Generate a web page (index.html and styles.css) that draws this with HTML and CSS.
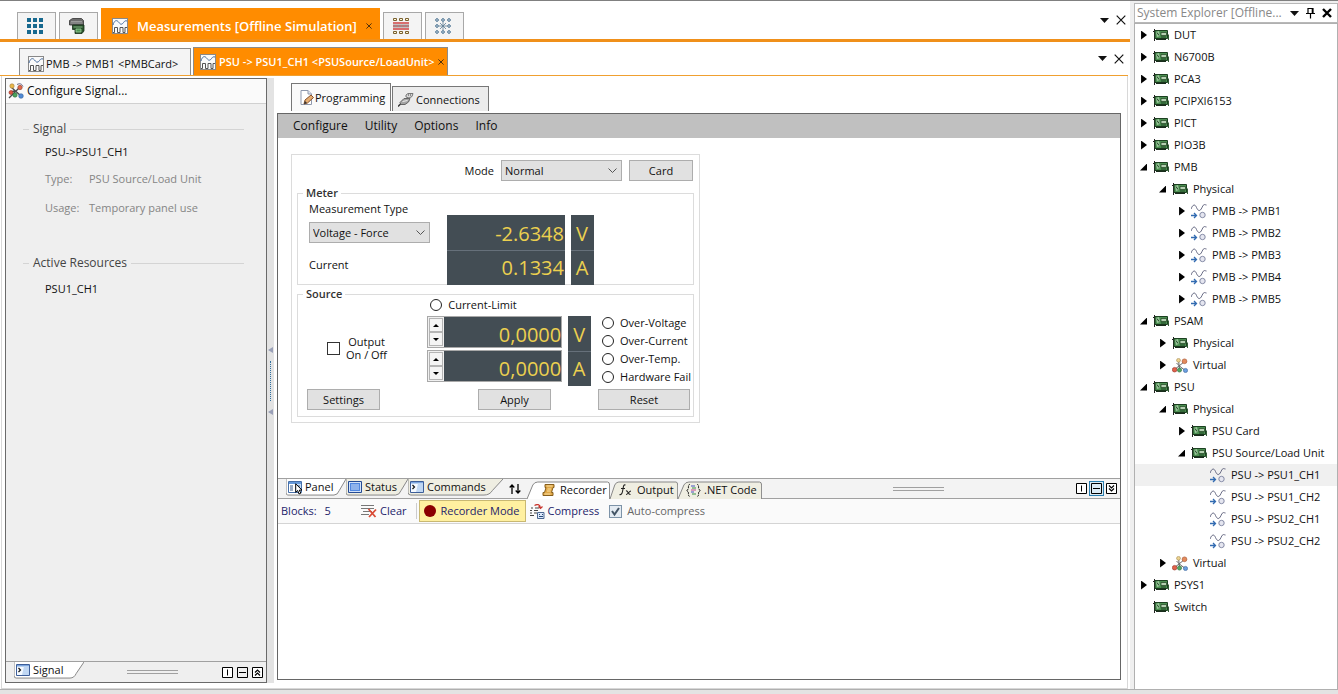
FILE: index.html
```html
<!DOCTYPE html>
<html lang="en">
<head>
<meta charset="utf-8">
<title>Measurements</title>
<link rel="stylesheet" href="styles.css">
</head>
<body>
<svg class="defs" aria-hidden="true">
  <symbol id="i-wave" viewBox="0 0 16 16"><rect x=".5" y=".5" width="15" height="15" fill="#fafafa" stroke="#888"/><path d="M1 7c1-4 3-5 4.500-4S8 7 10 6s2-4 5-3" fill="none" stroke="#456a9c"/><path d="M1 14.500h1.500v-5h3v5h2.500v-5h3v5h2v-5h2" fill="none" stroke="#555"/></symbol>
  <symbol id="i-grid" viewBox="0 0 16 16"><path d="M0 0h4v4H0zM6 0h4v4H6zM12 0h4v4h-4zM0 6h4v4H0zM6 6h4v4H6zM12 6h4v4h-4zM0 12h4v4H0zM6 12h4v4H6zM12 12h4v4h-4z" fill="#17698f"/></symbol>
  <symbol id="i-rack" viewBox="0 0 16 16"><path d="M.5 2.500l3-2h9l2 2V7H.5z" fill="#6c6c6c" stroke="#333" stroke-width=".8"/><path d="M2 3.500h11M1.500 5h12" stroke="#b0b0b0" stroke-width=".7"/><path d="M3.500 7h11.500v6l-2 2.500H6v-4H3.500z" fill="#28532c" stroke="#17301b" stroke-width=".8"/><path d="M4.500 9h9M7 11h5v3H7z" fill="#4d9653" stroke="#9ccc9c" stroke-width=".8"/></symbol>
  <symbol id="i-bus" viewBox="0 0 16 16"><path d="M0 5h16M0 11h16" stroke="#cf4242" stroke-width="1.600"/><path d="M0 6.500h16v3H0z" fill="#9a8c8c"/><path d="M0 8h16" stroke="#d66" stroke-dasharray="2 1"/><g fill="#fff8d8" stroke="#7a6232"><path d="M.5.500h3v2h-3zM6.500.500h3v2h-3zM12.500.500h3v2h-3zM.5 13.500h3v2h-3zM6.500 13.500h3v2h-3zM12.500 13.500h3v2h-3z"/></g></symbol>
  <symbol id="i-star" viewBox="0 0 16 16"><g fill="#fff" stroke="#376487"><circle cx="2" cy="2" r="1.300"/><circle cx="8" cy="2" r="1.300"/><circle cx="14" cy="2" r="1.300"/><circle cx="2" cy="8" r="1.300"/><circle cx="14" cy="8" r="1.300"/><circle cx="2" cy="14" r="1.300"/><circle cx="8" cy="14" r="1.300"/><circle cx="14" cy="14" r="1.300"/></g><path d="M8 4v8M4 8h8M5 5l6 6M11 5l-6 6" stroke="#5c7b93" stroke-width=".8"/></symbol>
  <symbol id="i-card" viewBox="0 0 16 12"><path d="M1.500 0v12M0 2.500h2" stroke="#222"/><path d="M2 1.500h12.500v8H2z" fill="#4a8f50" stroke="#1c4021"/><path d="M3 3l3-1 1 5-3 1z" fill="#9bc79b"/><path d="M4 3.500l2 3M8 8h5" stroke="#1f4424"/><path d="M8 3.500h5.500v3H8z" fill="#b5d0b2" stroke="#294f2c" stroke-width=".8"/><path d="M3 9.500h10v1.500H3z" fill="#182c1b"/><path d="M14.500 5l1 1v5" fill="none" stroke="#335c37"/></symbol>
  <symbol id="i-signal" viewBox="0 0 16 15"><path d="M0 5C2 0 4 0 5.500 3.500S9 8 11 3.500 14 1 15.500 1" fill="none" stroke="#60637e"/><path d="M0 11.500h5M3 9l2.500 2.500L3 14" fill="none" stroke="#326bb1" stroke-width="1.300"/><circle cx="11.500" cy="11" r="2.700" fill="#e5e6f0" stroke="#858ba6"/></symbol>
  <symbol id="i-virtual" viewBox="0 0 16 15"><path d="M2.500 11.500L7 8l5.500-4.500M4.500 5l4 4 5 3.500M6.500 2l1 9" fill="none" stroke="#666"/><circle cx="6.500" cy="2.300" r="1.900" fill="#ecd391" stroke="#a58a4e" stroke-width=".6"/><circle cx="12.500" cy="3.300" r="2.400" fill="#e38a5c" stroke="#a14f2c" stroke-width=".6"/><circle cx="2.600" cy="11.700" r="2.300" fill="#e2614a" stroke="#922f21" stroke-width=".6"/><circle cx="7.500" cy="12" r="2.100" fill="#56a862" stroke="#28683b" stroke-width=".6"/><circle cx="13.500" cy="12.500" r="2.100" fill="#6c9fe0" stroke="#315f99" stroke-width=".6"/></symbol>
  <symbol id="i-configure" viewBox="0 0 16 16"><path d="M1 15L13 3M3 4l10 9M2 9l5-1" fill="none" stroke="#4a4a4a" stroke-width="1.300"/><path d="M9 1.500c3-1.500 5-.5 6 2" fill="none" stroke="#668"/><circle cx="4" cy="3" r="2.200" fill="#e9b949" stroke="#a57a3e" stroke-width=".6"/><circle cx="12" cy="4.500" r="2.200" fill="#e0684c" stroke="#914025" stroke-width=".6"/><circle cx="3" cy="9.500" r="2" fill="#df5540" stroke="#922f21" stroke-width=".6"/><circle cx="7" cy="12" r="2.200" fill="#4ea45b" stroke="#28683b" stroke-width=".6"/><circle cx="13" cy="13" r="2.300" fill="#528bd5" stroke="#315f99" stroke-width=".6"/></symbol>
  <symbol id="i-edit" viewBox="0 0 14 15"><path d="M1 .5h7l3.500 3.500v10.500H1z" fill="#fff" stroke="#8e98ad"/><path d="M8 .5V4h3.500" fill="#dfe5f0" stroke="#8e98ad"/><path d="M4 14l1-4 6-5 2.500 2.500-6 5.500z" fill="#e5ae73" stroke="#87502a"/><path d="M4 14l1-3 2 2z" fill="#333"/></symbol>
  <symbol id="i-plug" viewBox="0 0 16 15"><path d="M0 14l3-3" stroke="#333" stroke-width="1.500"/><path d="M2 10l4-4h6l-1.500 3.500L7 12H3z" fill="#a5a5a5" stroke="#666"/><path d="M4.500 9l5-1" stroke="#eee"/><path d="M8 2.500l2-1.500h5l-1 3-3 1.500-3-1z" fill="#d8d8d8" stroke="#777"/><path d="M10 2.500h4" stroke="#444" stroke-dasharray="1 1"/></symbol>
  <symbol id="i-window" viewBox="0 0 14 12"><path d="M.5.500h13v11H.5z" fill="#fff" stroke="#476fa8"/><path d="M1 1h12v2H1z" fill="#6599da"/><path d="M7 3h6v8H7z" fill="#c5dcf7"/><path d="M2 5h3M2 7h3M2 9h3M8 5h4M8 9h4" stroke="#345989"/></symbol>
  <symbol id="i-cursor" viewBox="0 0 9 12"><path d="M.7.800v8.500l2-1.800L4 11l1.800-.8-1.500-3.100H7z" fill="#fff" stroke="#000"/></symbol>
  <symbol id="i-status" viewBox="0 0 14 12"><path d="M.5.500h13v11H.5z" fill="#d2e3fa" stroke="#254b94"/><path d="M2 2h10v8H2z" fill="#4f86df"/><path d="M3 4h8M3 6h8M3 8h8" stroke="#cfe0fa"/></symbol>
  <symbol id="i-prompt" viewBox="0 0 14 12"><path d="M.5.500h13v11H.5z" fill="#f4f9ff" stroke="#3d5e99"/><path d="M1 1h12v1.500H1z" fill="#7ca6df"/><path d="M8 2.500h5V11H6z" fill="#c0d7f3"/><path d="M2.500 4L4.500 6 2.500 8" fill="none" stroke="#111" stroke-width="1.200"/></symbol>
  <symbol id="i-scroll" viewBox="0 0 12 12"><path d="M2.500.500h9v3h-1l-1.500 5h1.500v3H.5v-3h1.500l1.500-5h-1z" fill="#e0a848" stroke="#875e1c"/><path d="M4 2h6M2 10h6M5 5h3.500M4.500 7h3.500" stroke="#f8dda0"/></symbol>
  <symbol id="i-fx" viewBox="0 0 13 12"><path d="M6.500 1C4.500.5 4.500 2 4 5S3 11.500.5 10.500M2 4.500h4M7 7c2-1 2 4 4.500 3.500M12 7c-2 0-3 3.500-5 3.500" fill="none" stroke="#222" stroke-width="1.100"/></symbol>
  <symbol id="i-code" viewBox="0 0 15 14"><path d="M4 1C1.500.5 3 5 2 6L.5 7 2 8c1 1-.5 5 2 5M11 1c2.500-.5 1 4 2 5l1.500 1L13 8c-1 1 .5 5-2 5" fill="none" stroke="#222" stroke-dasharray="2 .6"/><path d="M5 2.500h4M5 8.500h3" stroke="#4652c1"/><path d="M6 4.500h4M6 10.500h4" stroke="#389047"/><path d="M5 6.500h5" stroke="#c74390"/></symbol>
  <symbol id="i-clear" viewBox="0 0 16 14"><path d="M0 1.500h13M0 4.500h13M2 7.500h9M0 10.500h8" stroke="#777"/><path d="M7.500 5l7 8M15 5.500l-7 7.500" stroke="#d94b36" stroke-width="1.800"/></symbol>
  <symbol id="i-compress" viewBox="0 0 15 15"><path d="M1 4h2M5 4h4M0 6.500h2M4 6.500h4M0 9h2M4 9h3M0 11.500h4" stroke="#444"/><path d="M4.500 1.500C7 0 10 0 10.500 4M8.500 2.500l2 2 2-2" fill="none" stroke="#c9362e" stroke-width="1.200"/><path d="M7.500 8.500h6.500v6H7.500z" fill="#dce8fa" stroke="#4c6892"/><path d="M9 10.500h1M12 10.500h1M9 12.500h4" stroke="#294b78"/></symbol>
  <symbol id="i-x" viewBox="0 0 10 10"><path d="M.7.700l8.600 8.600M9.300.700L.7 9.300" stroke="#111" stroke-width="1.200"/></symbol>
  <symbol id="i-boldx" viewBox="0 0 10 10"><path d="M1 1l8 8M9 1L1 9" stroke="#000" stroke-width="2.400"/></symbol>
  <symbol id="i-down" viewBox="0 0 9 5"><path d="M0 0h9L4.500 5z" fill="#111"/></symbol>
  <symbol id="i-pin" viewBox="0 0 9 12"><path d="M2 1.500h5v5H2zM0 6.500h9M4.500 7v4.500M6.300 2v4" fill="none" stroke="#000" stroke-width="1.200"/></symbol>
  <symbol id="i-split" viewBox="0 0 11 11"><path d="M.5.500h10v10H.5zM5.500 2.500v6" fill="#fff" stroke="#000"/></symbol>
  <symbol id="i-stack" viewBox="0 0 11 11"><path d="M.5.500h10v10H.5zM2 5.500h7" fill="none" stroke="#000"/></symbol>
  <symbol id="i-expand" viewBox="0 0 11 11"><path d="M.5.500h10v10H.5z" fill="#fff" stroke="#000"/><path d="M3 5.500L5.500 3 8 5.500M3 8.500L5.500 6 8 8.500" fill="none" stroke="#000" stroke-width="1.200"/></symbol>
  <symbol id="i-collapse" viewBox="0 0 11 11"><path d="M.5.500h10v10H.5z" fill="#fff" stroke="#000"/><path d="M3 2.500L5.500 5 8 2.500M3 5.500L5.500 8 8 5.500" fill="none" stroke="#000" stroke-width="1.200"/></symbol>
  <symbol id="i-swap" viewBox="0 0 12 10"><path d="M3 10V1M.7 3.500L3 1l2.300 2.500M9 0v9M6.700 6.500L9 9l2.300-2.500" fill="none" stroke="#000" stroke-width="1.300"/></symbol>
  <symbol id="i-hang" viewBox="0 0 100 18" preserveAspectRatio="none"><path d="M0 0V14Q0 17 3 17H80Q86 17 89 12L100 0" stroke="#888" vector-effect="non-scaling-stroke"/></symbol>
  <symbol id="i-stand" viewBox="0 0 100 18" preserveAspectRatio="none"><path d="M0 18L7 4Q9 1 13 1H97Q99.500 1 99.500 4V18" stroke="#888" vector-effect="non-scaling-stroke"/></symbol>
</svg>

<div class="app">
  <main class="workspace">
    <nav class="top-tabs">
      <button class="tab icon-tab" aria-label="Overview"><svg class="i16"><use href="#i-grid"/></svg></button>
      <button class="tab icon-tab" aria-label="Rack"><svg class="i16"><use href="#i-rack"/></svg></button>
      <div class="tab top-active">
        <svg class="i16"><use href="#i-wave"/></svg>
        <span>Measurements [Offline Simulation]</span>
        <button class="close" aria-label="Close"><svg class="i6"><use href="#i-x"/></svg></button>
      </div>
      <button class="tab icon-tab" aria-label="Bus"><svg class="i16"><use href="#i-bus"/></svg></button>
      <button class="tab icon-tab" aria-label="Network"><svg class="i16"><use href="#i-star"/></svg></button>
      <div class="tab-tools">
        <button aria-label="List"><svg class="i-tri"><use href="#i-down"/></svg></button>
        <button aria-label="Close all"><svg class="i10"><use href="#i-x"/></svg></button>
      </div>
    </nav>

    <nav class="doc-tabs">
      <button class="tab doc-tab"><svg class="i16"><use href="#i-wave"/></svg>PMB -&gt; PMB1 &lt;PMBCard&gt;</button>
      <div class="tab doc-active">
        <svg class="i16"><use href="#i-wave"/></svg><span>PSU -&gt; PSU1_CH1 &lt;PSUSource/LoadUnit&gt;</span>
        <button class="close" aria-label="Close"><svg class="i6"><use href="#i-x"/></svg></button>
      </div>
      <div class="tab-tools">
        <button aria-label="List"><svg class="i-tri"><use href="#i-down"/></svg></button>
        <button aria-label="Close all"><svg class="i10"><use href="#i-x"/></svg></button>
      </div>
    </nav>

    <div class="document">
      <aside class="signal-panel">
        <header class="signal-head"><svg class="i16"><use href="#i-configure"/></svg>Configure Signal...</header>
        <div class="signal-body">
          <h2 class="rule">Signal</h2>
          <p class="name">PSU-&gt;PSU1_CH1</p>
          <dl class="facts">
            <dt>Type:</dt><dd>PSU Source/Load Unit</dd>
            <dt>Usage:</dt><dd>Temporary panel use</dd>
          </dl>
          <h2 class="rule">Active Resources</h2>
          <p class="name resource">PSU1_CH1</p>
        </div>
        <footer class="signal-foot">
          <button class="strip-tab hang selected signal-tab"><svg class="shape"><use href="#i-hang"/></svg><svg class="i14"><use href="#i-prompt"/></svg><span>Signal</span></button>
          <span class="grip"></span>
          <div class="pane-tools">
            <button aria-label="Split"><svg class="i11"><use href="#i-split"/></svg></button>
            <button aria-label="Stack"><svg class="i11"><use href="#i-stack"/></svg></button>
            <button aria-label="Expand"><svg class="i11"><use href="#i-expand"/></svg></button>
          </div>
        </footer>
      </aside>

      <div class="splitter">
        <span class="split-arrow"></span><span class="split-dots"></span><span class="split-arrow"></span>
      </div>

      <section class="editor">
        <nav class="page-tabs">
          <button class="page-tab current"><svg class="i14t"><use href="#i-edit"/></svg>Programming</button>
          <button class="page-tab"><svg class="i16"><use href="#i-plug"/></svg>Connections</button>
        </nav>
        <div class="editor-box">
          <nav class="menu">
            <button>Configure</button><button>Utility</button><button>Options</button><button>Info</button>
          </nav>
          <div class="canvas">
            <form class="psu">
              <div class="mode-row">
                <label for="mode">Mode</label>
                <select id="mode"><option>Normal</option></select>
                <button type="button" class="btn btn-card">Card</button>
              </div>
              <fieldset>
                <legend>Meter</legend>
                <div class="meter">
                  <div class="meter-labels">
                    <label for="mtype">Measurement Type</label>
                    <select id="mtype"><option>Voltage - Force</option></select>
                    <span class="current-label">Current</span>
                  </div>
                  <div class="lcd"><output>-2.6348</output><output>0.1334</output></div>
                  <div class="lcd unit"><span>V</span><span>A</span></div>
                </div>
              </fieldset>
              <fieldset class="source-set">
                <legend>Source</legend>
                <div class="source">
                  <label class="output"><input type="checkbox"><span>Output<br>On / Off</span></label>
                  <div class="levels">
                    <label class="radio limit"><input type="radio" name="limit">Current-Limit</label>
                    <div class="spin">
                      <div class="spin-btns"><button type="button" class="up" aria-label="Raise voltage"></button><button type="button" class="down" aria-label="Lower voltage"></button></div>
                      <input type="text" aria-label="Voltage" value="0,0000">
                    </div>
                    <div class="spin">
                      <div class="spin-btns"><button type="button" class="up" aria-label="Raise current"></button><button type="button" class="down" aria-label="Lower current"></button></div>
                      <input type="text" aria-label="Current" value="0,0000">
                    </div>
                  </div>
                  <div class="lcd unit"><span>V</span><span>A</span></div>
                  <div class="faults">
                    <label class="radio"><input type="radio" name="f1">Over-Voltage</label>
                    <label class="radio"><input type="radio" name="f2">Over-Current</label>
                    <label class="radio"><input type="radio" name="f3">Over-Temp.</label>
                    <label class="radio"><input type="radio" name="f4">Hardware Fail</label>
                  </div>
                </div>
                <div class="actions">
                  <button type="button" class="btn">Settings</button>
                  <button type="button" class="btn">Apply</button>
                  <button type="button" class="btn btn-wide">Reset</button>
                </div>
              </fieldset>
            </form>
          </div>

          <div class="strip">
            <button class="strip-tab hang selected w-panel"><svg class="shape"><use href="#i-hang"/></svg><span class="stacked"><svg class="i14"><use href="#i-window"/></svg><svg class="pointer"><use href="#i-cursor"/></svg></span><span>Panel</span></button>
            <button class="strip-tab hang w-status"><svg class="shape"><use href="#i-hang"/></svg><svg class="i14"><use href="#i-status"/></svg><span>Status</span></button>
            <button class="strip-tab hang w-commands"><svg class="shape"><use href="#i-hang"/></svg><svg class="i14"><use href="#i-prompt"/></svg><span>Commands</span></button>
            <button class="swap" aria-label="Swap panes"><svg class="i12"><use href="#i-swap"/></svg></button>
            <button class="strip-tab stand selected w-recorder"><svg class="shape"><use href="#i-stand"/></svg><svg class="i12s"><use href="#i-scroll"/></svg><span>Recorder</span></button>
            <button class="strip-tab stand w-output"><svg class="shape"><use href="#i-stand"/></svg><svg class="i12s"><use href="#i-fx"/></svg><span>Output</span></button>
            <button class="strip-tab stand w-code"><svg class="shape"><use href="#i-stand"/></svg><svg class="i15"><use href="#i-code"/></svg><span>.NET Code</span></button>
            <span class="grip"></span>
            <div class="pane-tools">
              <button aria-label="Split"><svg class="i11"><use href="#i-split"/></svg></button>
              <button class="on" aria-label="Stack"><svg class="i11"><use href="#i-stack"/></svg></button>
              <button aria-label="Collapse"><svg class="i11"><use href="#i-collapse"/></svg></button>
            </div>
          </div>
          <div class="toolbar">
            <span class="blocks">Blocks: <b>5</b></span>
            <button class="tool"><svg class="i16"><use href="#i-clear"/></svg>Clear</button>
            <span class="sep"></span>
            <button class="tool rec"><span class="dot"></span>Recorder Mode</button>
            <button class="tool"><svg class="i15"><use href="#i-compress"/></svg>Compress</button>
            <label class="auto"><input type="checkbox" checked>Auto-compress</label>
          </div>
          <div class="log"></div>
        </div>
      </section>
    </div>
  </main>

  <aside class="explorer">
    <header class="explorer-head">
      <h2>System Explorer [Offline...</h2>
      <button aria-label="Menu"><svg class="i-tri"><use href="#i-down"/></svg></button>
      <button aria-label="Pin"><svg class="pin"><use href="#i-pin"/></svg></button>
      <button aria-label="Close"><svg class="i10"><use href="#i-boldx"/></svg></button>
    </header>
    <ul class="tree">
      <li class="l0 shut"><svg class="card"><use href="#i-card"/></svg>DUT</li>
      <li class="l0 shut"><svg class="card"><use href="#i-card"/></svg>N6700B</li>
      <li class="l0 shut"><svg class="card"><use href="#i-card"/></svg>PCA3</li>
      <li class="l0 shut"><svg class="card"><use href="#i-card"/></svg>PCIPXI6153</li>
      <li class="l0 shut"><svg class="card"><use href="#i-card"/></svg>PICT</li>
      <li class="l0 shut"><svg class="card"><use href="#i-card"/></svg>PIO3B</li>
      <li class="l0 open"><svg class="card"><use href="#i-card"/></svg>PMB</li>
      <li class="l1 open"><svg class="card"><use href="#i-card"/></svg>Physical</li>
      <li class="l2 shut"><svg class="sig"><use href="#i-signal"/></svg>PMB -&gt; PMB1</li>
      <li class="l2 shut"><svg class="sig"><use href="#i-signal"/></svg>PMB -&gt; PMB2</li>
      <li class="l2 shut"><svg class="sig"><use href="#i-signal"/></svg>PMB -&gt; PMB3</li>
      <li class="l2 shut"><svg class="sig"><use href="#i-signal"/></svg>PMB -&gt; PMB4</li>
      <li class="l2 shut"><svg class="sig"><use href="#i-signal"/></svg>PMB -&gt; PMB5</li>
      <li class="l0 open"><svg class="card"><use href="#i-card"/></svg>PSAM</li>
      <li class="l1 shut"><svg class="card"><use href="#i-card"/></svg>Physical</li>
      <li class="l1 shut"><svg class="sig"><use href="#i-virtual"/></svg>Virtual</li>
      <li class="l0 open"><svg class="card"><use href="#i-card"/></svg>PSU</li>
      <li class="l1 open"><svg class="card"><use href="#i-card"/></svg>Physical</li>
      <li class="l2 shut"><svg class="card"><use href="#i-card"/></svg>PSU Card</li>
      <li class="l2 open"><svg class="card"><use href="#i-card"/></svg>PSU Source/Load Unit</li>
      <li class="l3 picked"><svg class="sig"><use href="#i-signal"/></svg>PSU -&gt; PSU1_CH1</li>
      <li class="l3"><svg class="sig"><use href="#i-signal"/></svg>PSU -&gt; PSU1_CH2</li>
      <li class="l3"><svg class="sig"><use href="#i-signal"/></svg>PSU -&gt; PSU2_CH1</li>
      <li class="l3"><svg class="sig"><use href="#i-signal"/></svg>PSU -&gt; PSU2_CH2</li>
      <li class="l1 shut"><svg class="sig"><use href="#i-virtual"/></svg>Virtual</li>
      <li class="l0 shut"><svg class="card"><use href="#i-card"/></svg>PSYS1</li>
      <li class="l0"><svg class="card"><use href="#i-card"/></svg>Switch</li>
    </ul>
  </aside>
</div>
</body>
</html>
```

FILE: styles.css
```css
* { box-sizing: border-box; }
html, body { height: 100%; }
body {
  margin: 0;
  font: 11px/16px "Open Sans", "Noto Sans", sans-serif;
  color: #111;
  background: #e3e3e3;
}
button, input, select { font: inherit; color: inherit; margin: 0; }
button { border: 0; padding: 0; background: none; white-space: nowrap; }
h2, p, dl, dd, ul { margin: 0; padding: 0; }
svg { display: block; flex: none; }
.defs { position: absolute; width: 0; height: 0; }
.i16 { width: 16px; height: 16px; }
.i15 { width: 15px; height: 15px; }
.i14 { width: 14px; height: 12px; }
.i14t { width: 14px; height: 15px; }
.i12 { width: 12px; height: 10px; }
.i12s { width: 13px; height: 12px; }
.i11 { width: 11px; height: 11px; }
.i10 { width: 10px; height: 10px; }
.i6 { width: 6px; height: 6px; }
.i-tri { width: 9px; height: 5px; }
.pin { width: 9px; height: 12px; }

.app {
  display: flex;
  min-height: 100vh;
  padding-bottom: 4px;
  border-top: 1px solid #808080;
}
.workspace {
  flex: 1;
  min-width: 0;
  display: flex;
  flex-direction: column;
  background: #fff;
  border-bottom: 1px solid #b0b0b0;
}

/* document tabs */
.tab { display: flex; align-items: center; border: 1px solid #8c8c8c; border-bottom: 0; background: #f4f4f4; }
.top-tabs {
  display: flex;
  align-items: flex-end;
  gap: 3px;
  height: 41px;
  padding-left: 17px;
  border-bottom: 3px solid #f0901a;
}
.icon-tab { justify-content: center; width: 39px; height: 27px; padding-right: 3px; border-color: #a8a8a8; }
.top-active {
  gap: 9px;
  height: 31px;
  padding: 3px 7px 0 10px;
  background: #ff8c00;
  border-color: #ff8c00;
  color: #fff;
  font-size: 13px;
  font-weight: 600;
}
.tab-tools { display: flex; gap: 7px; margin-left: auto; align-self: center; align-items: center; padding-right: 4px; }
.doc-tabs {
  display: flex;
  align-items: flex-end;
  gap: 2px;
  height: 34px;
  margin-right: 2px;
  padding-left: 19px;
  border-bottom: 1px solid #f0a030;
}
.doc-tab { width: 172px; height: 27px; padding: 4px 8px 0; gap: 2px; }
.doc-active { height: 28px; padding: 0 3px 0 6px; gap: 3px; background: #ff8c00; color: #fff; font-weight: 600; }

.document {
  flex: 1;
  display: flex;
  margin: 0 2px 0 1px;
  padding: 2px 2px 5px 3px;
  border: 1px solid #d8d8d8;
  border-width: 0 1px 1px;
}

/* signal panel */
.signal-panel { display: flex; flex-direction: column; width: 262px; flex: none; border: 1px solid #6a6a6a; background: #efefef; }
.signal-head { display: flex; align-items: center; gap: 3px; height: 25px; padding-left: 2px; font-size: 12px; background: #fafafa; border-bottom: 1px solid #d0d0d0; }
.signal-body { flex: 1; padding: 17px 22px 0 17px; }
.rule { display: flex; align-items: center; gap: 4px; font-size: 12px; line-height: 16px; font-weight: 400; color: #444; }
.rule::before, .rule::after { content: ""; height: 1px; background: #d4d4d4; }
.rule::before { width: 6px; }
.rule::after { flex: 1; }
.name { padding: 7px 0 0 22px; }
.resource { padding-top: 10px; }
.facts { display: grid; grid-template-columns: 44px 1fr; row-gap: 13px; padding: 11px 0 39px 22px; color: #858585; }
.signal-foot { display: flex; align-items: flex-start; justify-content: space-between; height: 21px; border-top: 1px solid #a0a0a0; }
.grip { width: 51px; height: 4px; border: 1px solid #a0a0a0; border-width: 1px 0; align-self: center; }
.pane-tools { display: flex; align-self: center; padding-right: 1px; }
.pane-tools button { padding: 1px; border: 1px solid transparent; }
.pane-tools .on { border-color: #2a7fb0; background: #dcebf4; }

.splitter { display: flex; flex-direction: column; align-items: center; justify-content: center; gap: 8px; width: 7px; flex: none; margin-right: 3px; background: #e3e3e3; }
.split-arrow { border: 3px solid transparent; border-right: 5px solid #9aa0b8; border-left: 0; }
.split-dots { height: 40px; border-left: 1px dotted #2f6f9f; }

/* editor */
.editor { flex: 1; min-width: 0; display: flex; flex-direction: column; padding: 0 4px 3px 0; }
.page-tabs { display: flex; align-items: flex-end; gap: 1px; height: 35px; padding: 0 0 2px 14px; }
.page-tab { display: flex; align-items: center; gap: 2px; width: 97px; height: 25px; padding: 2px 5px 0; background: #ececec; border: 1px solid #777; border-bottom: 0; }
.page-tab.current { width: 100px; height: 28px; padding: 0 8px; gap: 1px; background: #fafafa; }
.editor-box { flex: 1; display: flex; flex-direction: column; border: 1px solid #666; background: #fff; }
.menu { display: flex; align-items: center; gap: 17px; height: 24px; padding-left: 15px; background: #c0c0c0; font-size: 12px; }
.canvas { height: 340px; padding: 16px 13px; }

.psu { width: 409px; padding: 5px 5px; border: 1px solid #dcdcdc; }
.mode-row { display: flex; align-items: center; justify-content: flex-end; gap: 7px; height: 21px; padding-right: 1px; margin-bottom: 5px; }
select {
  width: 121px;
  height: 21px;
  padding: 0 3px;
  appearance: none;
  border: 1px solid #adadad;
  border-radius: 0;
  color: #111;
  background: #e1e1e1 url("data:image/svg+xml,%3Csvg xmlns='http://www.w3.org/2000/svg' width='9' height='6'%3E%3Cpath d='M.5.5l4 4 4-4' fill='none' stroke='%23555'/%3E%3C/svg%3E") no-repeat right 4px center;
}
.btn { width: 73px; height: 21px; border: 1px solid #adadad; background: #e1e1e1; text-align: center; }
.btn-card { width: 64px; }
.btn-wide { width: 92px; }
fieldset { min-width: 0; margin: 0; padding: 0 0 0 11px; border: 1px solid #dcdcdc; }
legend { padding: 0 3px; margin-left: -6px; line-height: 14px; font-weight: 600; color: #333; }
.meter { display: flex; align-items: flex-end; }
.meter-labels { display: flex; flex-direction: column; width: 138px; height: 84px; padding-top: 1px; }
.meter-labels select { margin: 5px 0 14px; }
.lcd { width: 118px; margin-bottom: -1px; background: #434d54; color: #ecd04f; font-size: 20px; line-height: 34px; text-align: right; }
.lcd > * { display: block; height: 35px; padding: 2px 1px 0 0; overflow: hidden; }
.lcd > * + * { border-top: 1px solid #66707a; padding-top: 0; }
.lcd.unit { width: 23px; margin-left: 6px; text-align: center; }
.source-set { margin-top: 2px; padding: 0 2px 6px 9px; }
.source-set legend { margin-left: -4px; }
.source { display: flex; align-items: flex-end; margin-top: -5px; }
.output { display: flex; align-items: center; gap: 6px; width: 121px; padding-left: 20px; line-height: 13px; text-align: center; align-self: center; margin-top: 14px; }
.output input { appearance: none; width: 13px; height: 13px; border: 1px solid #333; background: #fff; }
.levels { width: 135px; padding-bottom: 4px; }
.radio { display: flex; align-items: center; gap: 6px; height: 18px; white-space: nowrap; }
.radio input { appearance: none; flex: none; width: 12px; height: 12px; border: 1px solid #222; border-radius: 50%; background: #fff; }
.limit { padding-left: 3px; margin-bottom: 2px; }
.spin { display: flex; height: 32px; border: 1px solid #a8a8a8; background: #434d54; }
.spin + .spin { margin-top: 2px; }
.spin-btns { display: flex; flex-direction: column; width: 16px; background: #f0f0f0; padding: 1px; }
.spin-btns button { flex: 1; display: flex; align-items: center; justify-content: center; border: 1px solid #b4b4b4; background: #f4f4f4; }
.spin-btns button::before { content: ""; border: 3px solid transparent; }
.spin-btns .up::before { border-top: 0; border-bottom-color: #000; }
.spin-btns .down::before { border-bottom: 0; border-top-color: #000; }
.spin input { flex: 1; min-width: 0; border: 0; padding: 4px 0 0; background: none; color: #ecd04f; font-size: 20px; text-align: right; }
.source .lcd { margin-bottom: 0; }
.faults { padding-left: 11px; }
.actions { display: grid; grid-template-columns: 171px 120px 1fr; margin-top: 3px; }

/* lower strip */
.strip { display: flex; align-items: flex-start; height: 21px; padding-left: 8px; background: #f3f3f3; border: 1px solid #a0a0a0; border-width: 1px 0; }
.strip-tab { position: relative; display: flex; align-items: center; gap: 3px; height: 17px; padding: 0 0 2px 2px; }
.strip-tab > * { position: relative; }
.strip-tab .shape { position: absolute; inset: 0; width: 100%; height: 100%; fill: #efeee2; overflow: visible; }
.strip-tab.selected .shape { fill: #fff; }
.strip-tab.stand { height: 18px; margin-top: 2px; gap: 5px; padding: 0 0 0 15px; }
.w-panel { width: 60px; }
.w-status { width: 62px; }
.w-commands { width: 95px; }
.w-recorder { width: 83px; }
.w-output { width: 68px; }
.w-code { width: 84px; }
.strip-tab.w-output { padding-left: 9px; }
.strip-tab.w-code { padding-left: 8px; gap: 3px; }
.signal-tab { width: 70px; margin-left: 8px; }
.swap { margin: 5px 6px 0; }
.pointer { position: absolute; left: 7px; top: 2px; width: 9px; height: 12px; }
.strip .grip { margin-left: auto; }
.strip .pane-tools { width: 176px; justify-content: flex-end; }
.toolbar { display: flex; align-items: center; height: 25px; padding-left: 3px; background: #fafafa; border-bottom: 1px solid #d4d4d4; color: #1d1d6b; }
.blocks { width: 80px; }
.blocks b { margin-left: 5px; font-weight: 400; }
.tool { display: flex; align-items: center; gap: 3px; }
.sep { width: 1px; height: 16px; margin: 0 2px 0 9px; background: #ccc; }
.rec { gap: 5px; height: 22px; padding: 0 5px 0 4px; margin-right: 4px; border: 1px solid #c8b872; background: #fff0a0; }
.dot { width: 12px; height: 12px; border-radius: 50%; background: #8b0000; }
.auto { display: flex; align-items: center; gap: 5px; margin-left: 10px; color: #666; }
.auto input { appearance: none; width: 13px; height: 13px; border: 1px solid #7d93a8; background: #e4ebf2 url("data:image/svg+xml,%3Csvg xmlns='http://www.w3.org/2000/svg' width='11' height='11'%3E%3Cpath d='M2 5l2.500 3.500L9 2' fill='none' stroke='%23456' stroke-width='2'/%3E%3C/svg%3E") center; }
.log { flex: 1; }

/* explorer */
.explorer { display: flex; flex-direction: column; width: 208px; flex: none; padding: 2px 0 0 4px; background: #efefef; border-bottom: 1px solid #b0b0b0; }
.explorer-head { display: flex; align-items: center; justify-content: space-between; gap: 4px; height: 20px; padding: 0 5px 0 2px; border: 1px solid #b8b8b8; background: #fff; }
.explorer-head h2 { flex: none; padding-right: 1px; font-size: 12px; font-weight: 400; color: #888; white-space: nowrap; }
.tree { flex: 1; background: #fff; border: 1px solid #b0b0b0; border-bottom: 0; list-style: none; }
.tree li { display: flex; align-items: center; height: 22px; white-space: nowrap; }
.tree li::before { content: ""; width: 7px; height: 9px; flex: none; margin-right: 6px; }
.tree .shut::before { background: #000; clip-path: polygon(15% 0, 100% 50%, 15% 100%); }
.tree .open::before { height: 7px; background: #000; clip-path: polygon(100% 0, 100% 100%, 0 100%); }
.tree .l0 { padding-left: 5px; }
.tree .l1 { padding-left: 24px; }
.tree .l2 { padding-left: 43px; }
.tree .l3 { padding-left: 62px; }
.picked { background: #f0f0f0; }
.card { width: 16px; height: 12px; margin-right: 5px; }
.sig { width: 16px; height: 15px; margin-right: 5px; }
```
